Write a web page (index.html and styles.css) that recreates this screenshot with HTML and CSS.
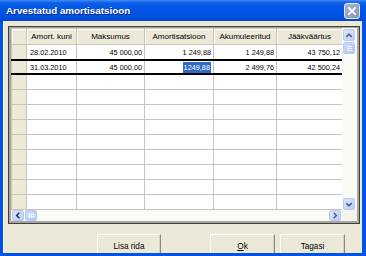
FILE: index.html
```html
<!DOCTYPE html>
<html lang="et">
<head>
    <meta charset="UTF-8">
    <title>Arvestatud amortisatsioon</title>
    <link rel="stylesheet" href="styles.css">
</head>
<body>
    <div class="window">
        <div class="titlebar">
            <span class="title">Arvestatud amortisatsioon</span>
            <span class="close">
                <svg width="14" height="14" viewBox="0 0 14 14">
                    <path d="M4 4 L10 10 M10 4 L4 10" stroke="#fff" stroke-width="1.8" stroke-linecap="square"/>
                </svg>
            </span>
        </div>

        <div class="body">
            <div class="grid">
                <div class="table-area">
                    <table>
                        <colgroup>
                            <col class="c-rh">
                            <col class="c1">
                            <col class="c2">
                            <col class="c3">
                            <col class="c4">
                            <col class="c5">
                        </colgroup>
                        <thead>
                            <tr>
                                <th class="rh"></th>
                                <th>Amort. kuni</th>
                                <th>Maksumus</th>
                                <th>Amortisatsioon</th>
                                <th>Akumuleeritud</th>
                                <th>Jääkväärtus</th>
                            </tr>
                        </thead>
                        <tbody>
                            <tr>
                                <td class="rh"></td>
                                <td class="date">28.02.2010</td>
                                <td class="num">45 000,00</td>
                                <td class="num">1 249,88</td>
                                <td class="num">1 249,88</td>
                                <td class="num">43 750,12</td>
                            </tr>
                            <tr class="current">
                                <td class="rh"></td>
                                <td class="date">31.03.2010</td>
                                <td class="num">45 000,00</td>
                                <td class="num"><span class="selected">1249,88</span></td>
                                <td class="num">2 499,76</td>
                                <td class="num">42 500,24</td>
                            </tr>
                            <tr><td class="rh"></td><td></td><td></td><td></td><td></td><td></td></tr>
                            <tr><td class="rh"></td><td></td><td></td><td></td><td></td><td></td></tr>
                            <tr><td class="rh"></td><td></td><td></td><td></td><td></td><td></td></tr>
                            <tr><td class="rh"></td><td></td><td></td><td></td><td></td><td></td></tr>
                            <tr><td class="rh"></td><td></td><td></td><td></td><td></td><td></td></tr>
                            <tr><td class="rh"></td><td></td><td></td><td></td><td></td><td></td></tr>
                            <tr><td class="rh"></td><td></td><td></td><td></td><td></td><td></td></tr>
                            <tr><td class="rh"></td><td></td><td></td><td></td><td></td><td></td></tr>
                            <tr><td class="rh"></td><td></td><td></td><td></td><td></td><td></td></tr>
                            <tr><td class="rh"></td><td></td><td></td><td></td><td></td><td></td></tr>
                        </tbody>
                    </table>
                </div>

                <!-- vertical scrollbar -->
                <div class="vscroll">
                    <div class="sb-btn">
                        <svg width="11" height="11" viewBox="0 0 11 11"><polyline points="2.5,7 5.5,4 8.5,7" fill="none" stroke="#4d6185" stroke-width="1.6"/></svg>
                    </div>
                    <div class="sb-thumb">
                        <svg width="7" height="7" viewBox="0 0 7 7"><path d="M1 1.5 H6 M1 3.5 H6 M1 5.5 H6" stroke="#eef3fe" stroke-width="1"/></svg>
                    </div>
                    <div class="sb-track"></div>
                    <div class="sb-btn">
                        <svg width="11" height="11" viewBox="0 0 11 11"><polyline points="2.5,4 5.5,7 8.5,4" fill="none" stroke="#4d6185" stroke-width="1.6"/></svg>
                    </div>
                </div>

                <!-- horizontal scrollbar -->
                <div class="hscroll">
                    <div class="sb-btn">
                        <svg width="11" height="11" viewBox="0 0 11 11"><polyline points="7,2.5 4,5.5 7,8.5" fill="none" stroke="#1c2a55" stroke-width="1.6"/></svg>
                    </div>
                    <div class="sb-thumb">
                        <svg width="9" height="7" viewBox="0 0 9 7"><path d="M2.5 1 V6 M4.5 1 V6 M6.5 1 V6 M1 2.5 H8 M1 4.5 H8" stroke="#eef3fe" stroke-width="1"/></svg>
                    </div>
                    <div class="sb-track"></div>
                    <div class="sb-btn">
                        <svg width="11" height="11" viewBox="0 0 11 11"><polyline points="4,2.5 7,5.5 4,8.5" fill="none" stroke="#4d6185" stroke-width="1.6"/></svg>
                    </div>
                </div>
                <div class="corner"></div>
            </div>

            <div class="buttons">
                <button class="btn btn-add">Lisa rida</button>
                <button class="btn"><u>O</u>k</button>
                <button class="btn">Tagasi</button>
            </div>
        </div>
    </div>
</body>
</html>
```

FILE: styles.css
```css
html, body {
    margin: 0;
    padding: 0;
    width: 366px;
    height: 256px;
    overflow: hidden;
    font-family: "Liberation Sans", Arial, sans-serif;
}

.window {
    width: 366px;
    height: 256px;
    display: flex;
    flex-direction: column;
    background-color: #0054e3;
}

/* title bar */
.titlebar {
    height: 21px;
    flex: none;
    display: flex;
    align-items: center;
    justify-content: space-between;
    padding: 0 6px 0 6px;
    background: linear-gradient(#3f8cf3 0, #0b5ee9 3px, #0055e5 10px, #0050dc 18px, #0046c8 21px);
}

.title {
    color: #fff;
    font-weight: bold;
    font-size: 9.8px;
    text-shadow: 1px 1px 0 #0a2a8c;
}

.close {
    width: 14px;
    height: 14px;
    margin-top: 1px;
    border: 1px solid #e4e9f5;
    border-radius: 3px;
    background: linear-gradient(135deg, #a7b4cf, #8898bb);
    display: flex;
}

/* window body */
.body {
    flex: 1;
    margin: 0 4px 3px 3px;
    background-color: #ece9d8;
    box-shadow: inset 1px 0 0 #fbfaf5;
    padding: 5px 0 0 5px;
    overflow: hidden;
}

.grid {
    width: 346px;
    border: 1px solid #404040;
    padding: 1px 2px 2px 2px;
    background-color: #a7a69e;
    display: grid;
    grid-template-columns: 331px 15px;
    grid-template-rows: 182px 11px;
}

.table-area {
    overflow: hidden;
    background-color: #fff;
}

table {
    border-collapse: collapse;
    table-layout: fixed;
    width: 331px;
}

.c-rh { width: 15px; }
.c1 { width: 50px; }
.c2 { width: 68px; }
.c3 { width: 69px; }
.c4 { width: 63px; }
.c5 { width: 66px; }

th {
    height: 15px;
    padding: 0;
    font-size: 8px;
    font-weight: normal;
    color: #000;
    text-align: center;
    background-color: #ece9d8;
    border: 1px solid #c9c6b7;
    box-shadow: inset 1px 1px 0 #fff;
    white-space: nowrap;
    overflow: hidden;
}

td {
    height: 14px;
    padding: 0 2px;
    font-size: 7.3px;
    color: #000;
    border: 1px solid #c4c4c4;
    white-space: nowrap;
    overflow: hidden;
}

td.rh {
    background-color: #ece9d8;
    border-color: #c9c6b7;
    padding: 0;
}

td.date {
    padding-left: 3px;
}

td.num {
    text-align: right;
}

tr.current td {
    border-top: 2px solid #000;
    border-bottom: 2px solid #000;
    height: 12px;
}

.selected {
    background-color: #316ac5;
    color: #fff;
    padding: 1px 1px 1px 1px;
}

/* scrollbars */
.vscroll {
    display: flex;
    flex-direction: column;
    background-color: #fbfbf6;
    padding: 1px 1px 0 1px;
    gap: 1px;
}

.hscroll {
    display: flex;
    background-color: #fbfbf6;
    padding: 0 1px 0 1px;
    gap: 1px;
}

.sb-btn, .sb-thumb {
    flex: none;
    width: 12px;
    height: 12px;
    box-sizing: border-box;
    border: 1px solid #b9c9f3;
    border-radius: 2px;
    background: linear-gradient(135deg, #dbe5fd, #bccdf9);
    display: flex;
    align-items: center;
    justify-content: center;
}

.hscroll .sb-btn, .hscroll .sb-thumb {
    height: 11px;
}

.sb-thumb {
    background: linear-gradient(135deg, #cbd9fd, #b1c6f8);
}

.sb-track {
    flex: 1;
}

.corner {
    background-color: #f4f3ee;
}

/* buttons */
.buttons {
    display: flex;
    gap: 5px;
    margin-top: 10px;
    padding-left: 89px;
}

.btn {
    height: 22px;
    width: 65px;
    margin: 0;
    padding: 2px 0 0 0;
    font-family: "Liberation Sans", Arial, sans-serif;
    font-size: 8.2px;
    color: #000;
    background-color: #ece9d8;
    border: none;
    border-top: 1px solid #fff;
    border-left: 1px solid #fff;
    border-right: 1px solid #8c8a80;
    box-shadow: inset -1px 0 0 #d6d3c4;
}

.btn-add {
    width: 64px;
    margin-right: 44px;
}
```
